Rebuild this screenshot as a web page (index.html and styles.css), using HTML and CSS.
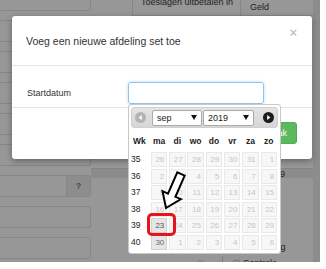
FILE: index.html
```html
<!DOCTYPE html>
<html lang="nl">
<head>
<meta charset="utf-8">
<title>Voeg een nieuwe afdeling set toe</title>
<link rel="stylesheet" href="styles.css">
</head>
<body>
<div class="screen">
  <div class="page">
    <div class="left-col">
      <div class="box"></div>
      <div class="box"></div>
      <div class="box"></div>
      <div class="box"></div>
      <div class="box"></div>
      <div class="box"></div>
      <div class="box group"><span class="addon">?</span></div>
      <div class="box"></div>
      <div class="box"></div>
    </div>
    <div class="right-col">
      <div class="thead">
        <div class="th th-main">Toeslagen uitbetalen in</div>
        <div class="th th-geld">Geld</div>
      </div>
      <div class="month-bar"><span>2019</span></div>
      <div class="pay-row">Betaling</div>
      <div class="bottom-row">
        <span class="radio"></span>
        <span class="divider"></span>
        <span class="check"></span>
        <span class="check-label">Controle</span>
      </div>
    </div>
    <div class="strip"></div>
  </div>

  <div class="modal">
    <div class="modal-header">
      <h4 class="modal-title">Voeg een nieuwe afdeling set toe</h4>
      <span class="close">×</span>
    </div>
    <div class="modal-body">
      <label class="label">Startdatum</label>
      <div class="input"></div>
    </div>
    <div class="modal-footer">
      <span class="btn">Maak</span>
    </div>
  </div>

  <div class="datepicker">
    <div class="dp-header">
      <svg class="nav" width="11" height="11" viewBox="0 0 11 11"><circle cx="5.5" cy="5.5" r="5.5" fill="#b4b4b4"/><path d="M6.8 3 L3.6 5.5 L6.8 8 Z" fill="#fff"/></svg>
      <div class="select month"><span>sep</span><i class="caret"></i></div>
      <div class="select year"><span>2019</span><i class="caret"></i></div>
      <svg class="nav next" width="11" height="11" viewBox="0 0 11 11"><circle cx="5.5" cy="5.5" r="5.5" fill="#1c1c1c"/><path d="M4.2 3 L7.4 5.5 L4.2 8 Z" fill="#fff"/></svg>
    </div>
    <div class="cal">
      <div class="wk-h">Wk</div><div class="dh">ma</div><div class="dh">di</div><div class="dh">wo</div><div class="dh">do</div><div class="dh">vr</div><div class="dh">za</div><div class="dh">zo</div>
      <div class="wk">35</div><div class="d">26</div><div class="d">27</div><div class="d">28</div><div class="d">29</div><div class="d">30</div><div class="d">31</div><div class="d">1</div>
      <div class="wk">36</div><div class="d">2</div><div class="d">3</div><div class="d">4</div><div class="d">5</div><div class="d">6</div><div class="d">7</div><div class="d">8</div>
      <div class="wk">37</div><div class="d">9</div><div class="d">10</div><div class="d">11</div><div class="d">12</div><div class="d">13</div><div class="d">14</div><div class="d">15</div>
      <div class="wk">38</div><div class="d">16</div><div class="d">17</div><div class="d">18</div><div class="d">19</div><div class="d">20</div><div class="d">21</div><div class="d">22</div>
      <div class="wk">39</div><div class="d active">23</div><div class="d">24</div><div class="d">25</div><div class="d">26</div><div class="d">27</div><div class="d">28</div><div class="d">29</div>
      <div class="wk">40</div><div class="d active soft">30</div><div class="d">1</div><div class="d">2</div><div class="d">3</div><div class="d">4</div><div class="d">5</div><div class="d">6</div>
    </div>
  </div>

  <svg class="arrow" width="35" height="45" viewBox="0 0 35 45"><polygon points="29.7,7.6 22.3,4.4 13,25.6 7.5,23.2 11,40 25.9,31.2 20.4,28.8" fill="#fff" stroke="#000" stroke-width="2" stroke-linejoin="miter"/></svg>
  <div class="highlight"></div>
</div>
</body>
</html>
```
FILE: styles.css
```css
* { box-sizing: border-box; }
body {
  margin: 0;
  background: #fff;
  font-family: "Liberation Sans", Arial, sans-serif;
  color: #333;
}
.screen {
  position: relative;
  width: 320px;
  height: 262px;
  overflow: hidden;
  background: #979797;
}
.page {
  display: grid;
  grid-template-columns: 91px 222px 7px;
  height: 100%;
}
.left-col {
  display: flex;
  flex-direction: column;
  gap: 9px;
  margin-top: -11px;
}
.box {
  height: 22px;
  flex: none;
  border: 1px solid #868686;
  border-left: none;
  border-radius: 0 3px 3px 0;
  display: flex;
  justify-content: flex-end;
}
.addon {
  width: 24px;
  background: #8d8d8d;
  border-left: 1px solid #868686;
  color: #4a4a4a;
  font-size: 9px;
  font-weight: bold;
  display: flex;
  align-items: center;
  justify-content: center;
}
.right-col {
  display: flex;
  flex-direction: column;
}
.thead {
  display: flex;
  height: 16px;
  margin-left: 41px;
  border-bottom: 1px solid #868686;
}
.th {
  font-size: 9px;
  color: #222;
  line-height: 10px;
  white-space: nowrap;
}
.th-main {
  width: 109px;
  border-left: 1px solid #868686;
  border-right: 1px solid #868686;
  padding-left: 8px;
  margin-top: -3px;
  border-top: none;
}
.th-geld {
  padding-left: 9px;
  padding-top: 2px;
}
.month-bar {
  margin-top: 152px;
  height: 10px;
  background: #8b8b8b;
  border-top: 1px solid #838383;
  font-size: 9px;
  line-height: 10px;
  color: #222;
  padding-left: 174px;
  overflow: hidden;
}
.pay-row {
  margin-top: 64px;
  font-size: 9px;
  line-height: 10px;
  color: #222;
  padding-left: 162px;
}
.bottom-row {
  margin-top: 4px;
  height: 12px;
  display: flex;
  align-items: flex-start;
  padding-left: 106px;
  font-size: 9px;
  color: #222;
}
.radio {
  width: 7px;
  height: 7px;
  border: 1px solid #777;
  border-radius: 50%;
  margin-top: 4px;
}
.divider {
  width: 1px;
  height: 10px;
  background: #808080;
  margin-left: 18px;
}
.check {
  width: 7px;
  height: 7px;
  border: 1px solid #777;
  border-radius: 1px;
  margin: 4px 0 0 10px;
}
.check-label {
  margin-left: 3px;
  margin-top: 2px;
}
.strip {
  background: #8c8c8c;
}

/* modal */
.modal {
  position: absolute;
  left: 12px;
  top: 16px;
  width: 300px;
  height: 143px;
  background: #fff;
  border-radius: 3px;
  box-shadow: 0 2px 6px rgba(0, 0, 0, 0.35);
}
.modal-header {
  height: 50px;
  padding: 0 15px 0 14px;
  border-bottom: 1px solid #e5e5e5;
  display: flex;
  justify-content: space-between;
  align-items: center;
}
.modal-title {
  margin: 0;
  font-size: 10.5px;
  font-weight: normal;
  color: #333;
}
.close {
  align-self: flex-start;
  margin-top: 10px;
  font-size: 13px;
  font-weight: bold;
  color: #c4c4c4;
  line-height: 14px;
}
.modal-body {
  height: 41px;
  padding: 16px 0 0 15px;
  display: flex;
  align-items: flex-start;
}
.label {
  width: 101px;
  font-size: 9px;
  color: #333;
  line-height: 22px;
}
.input {
  width: 136px;
  height: 22px;
  border: 1px solid #8fc3ee;
  border-radius: 3px;
  box-shadow: 0 0 3px rgba(102, 175, 233, 0.5);
}
.modal-footer {
  height: 52px;
  border-top: 1px solid #e5e5e5;
  padding: 14px 15px 0 0;
  display: flex;
  justify-content: flex-end;
  align-items: flex-start;
}
.btn {
  height: 22px;
  padding: 0 9px;
  background: #5cb85c;
  border: 1px solid #4cae4c;
  border-radius: 3px;
  color: #fff;
  font-size: 9px;
  line-height: 20px;
}

/* datepicker */
.datepicker {
  position: absolute;
  left: 128px;
  top: 104px;
  width: 153px;
  height: 150px;
  padding: 2px;
  background: #fff;
  border: 1px solid #c8c8c8;
  border-radius: 3px;
}
.dp-header {
  height: 21px;
  padding: 0 3px;
  border: 1px solid #d0d0d0;
  border-radius: 3px;
  background: linear-gradient(#e4e4e4, #d6d6d6);
  display: flex;
  align-items: center;
}
.nav { flex: none; margin-right: 6px; }
.nav.next { margin: 0 0 0 auto; }
.select {
  height: 16px;
  background: #fff;
  border: 1px solid #a9a9a9;
  border-radius: 2px;
  display: flex;
  align-items: center;
  justify-content: space-between;
  padding: 0 4px 0 4px;
  font-size: 9px;
  color: #222;
}
.month { width: 50px; margin-right: 1px; }
.year { width: 51px; }
.caret {
  width: 0;
  height: 0;
  border-left: 3px solid transparent;
  border-right: 3px solid transparent;
  border-top: 5px solid #111;
}
.cal {
  margin-top: 5px;
  display: grid;
  grid-template-columns: 18px repeat(7, 16.5px);
  grid-template-rows: 17.5px;
  grid-auto-rows: 15px;
  column-gap: 1.8px;
  row-gap: 1.5px;
}
.wk-h, .dh {
  font-size: 8.5px;
  font-weight: bold;
  color: #222;
  line-height: 16px;
}
.wk-h { padding-left: 2px; }
.dh { text-align: center; }
.wk {
  font-size: 8.5px;
  color: #222;
  line-height: 15px;
}
.d {
  background: #f7f7f7;
  border: 1px solid #e9e9e9;
  font-size: 8px;
  color: #c6c6c6;
  text-align: right;
  padding-right: 2px;
  line-height: 13px;
}
.d.active {
  background: #e6e6e6;
  border-color: #d2d2d2;
  color: #555;
}
.d.soft { color: #6a6a6a; }

.arrow {
  position: absolute;
  left: 155px;
  top: 168px;
}
.highlight {
  position: absolute;
  left: 147px;
  top: 213px;
  width: 29px;
  height: 23px;
  border: 3px solid #e8141a;
  border-radius: 5px;
}
```
